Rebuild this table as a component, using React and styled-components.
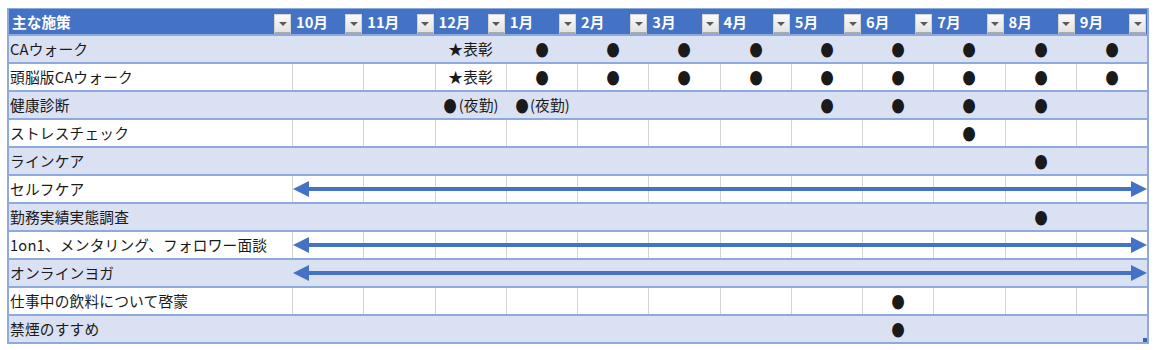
import React from "react";
import styled, { createGlobalStyle } from "styled-components";

const GlobalStyle = createGlobalStyle`
  body {
    margin: 0;
    background: #fff;
    font-family: "Noto Sans CJK JP", "Noto Sans", sans-serif;
  }
`;

const months = ["10月", "11月", "12月", "1月", "2月", "3月", "4月", "5月", "6月", "7月", "8月", "9月"];

const at = (idx, mark = "●") => {
  const list = Array(12).fill("");
  [].concat(idx).forEach((i) => (list[i] = mark));
  return list;
};

const caMarks = ["", "", "★表彰", "●", "●", "●", "●", "●", "●", "●", "●", "●"];

const rows = [
  { name: "CAウォーク", marks: caMarks },
  { name: "頭脳版CAウォーク", marks: caMarks },
  { name: "健康診断", marks: ["", "", "●(夜勤)", "●(夜勤)", "", "", "", "●", "●", "●", "●", ""] },
  { name: "ストレスチェック", marks: at(9) },
  { name: "ラインケア", marks: at(10) },
  { name: "セルフケア", marks: at([]), arrow: true },
  { name: "勤務実績実態調査", marks: at(10) },
  { name: "1on1、メンタリング、フォロワー面談", marks: at([]), arrow: true },
  { name: "オンラインヨガ", marks: at([]), arrow: true },
  { name: "仕事中の飲料について啓蒙", marks: at(8) },
  { name: "禁煙のすすめ", marks: at(8) },
];

const Page = styled.div`
  padding: 8px 0 0 7px;
`;

const Table = styled.div`
  position: relative;
  width: 1142px;
  border-left: 2px solid #8ea9db;
  border-right: 2px solid #8ea9db;
  box-sizing: border-box;
`;

const Grid = styled.div`
  display: grid;
  grid-template-columns: 283px repeat(12, 1fr);
`;

const HeaderRow = styled(Grid)`
  height: 26px;
  background: #4472c4;
  border-top: 1px solid #8ea9db;
  box-sizing: border-box;
`;

const HeadCell = styled.div`
  display: flex;
  align-items: center;
  justify-content: space-between;
  padding-left: ${(p) => (p.$first ? "3px" : "4px")};
  color: #fff;
  font-weight: 700;
  font-size: 14.7px;
  white-space: nowrap;
`;

const FilterButton = styled.span`
  display: flex;
  align-items: center;
  justify-content: center;
  align-self: flex-end;
  width: 17px;
  height: 20px;
  margin-right: 1px;
  box-sizing: border-box;
  background: linear-gradient(#fbfbfb, #e2e2e2);
  border: 1px solid #d4d4d4;
  border-bottom: 2px solid #a9a9a9;

  &::after {
    content: "";
    border-left: 4px solid transparent;
    border-right: 4px solid transparent;
    border-top: 4px solid #5a5a5a;
  }
`;

const Row = styled(Grid)`
  position: relative;
  height: 28px;
  box-sizing: border-box;
  border-top: 2px solid #8ea9db;
  background: ${(p) => (p.$shaded ? "#d9e1f2" : "#fff")};
  color: #1a1a1a;
  font-size: 14.7px;
  letter-spacing: 0.2px;
`;

const NameCell = styled.div`
  display: flex;
  align-items: center;
  padding: 0 0 1px 1px;
  white-space: nowrap;
  overflow: hidden;
`;

const Cell = styled.div`
  display: flex;
  align-items: center;
  justify-content: center;
  padding-bottom: 1px;
  white-space: nowrap;
  border-left: 1px solid ${(p) => (p.$shaded ? "transparent" : "#d4d4d4")};
`;

const Dot = styled.span`
  display: inline-block;
  transform: scaleX(0.82);
  font-size: 16px;
  line-height: 1;
`;

const ArrowLayer = styled.div`
  position: absolute;
  left: 284px;
  right: 0;
  top: 0;
  bottom: 0;
  display: flex;
  align-items: center;
`;

const Shaft = styled.div`
  flex: 1;
  height: 3.5px;
  background: #4472c4;
`;

const Head = ({ dir }) => (
  <svg width="16" height="16" viewBox="0 0 16 16" style={{ flex: "none" }}>
    {dir === "left" ? (
      <polygon points="0,8 16,0 16,16" fill="#4472c4" />
    ) : (
      <polygon points="16,8 0,0 0,16" fill="#4472c4" />
    )}
  </svg>
);

const BottomBorder = styled.div`
  height: 2px;
  background: #8ea9db;
`;

const ResizeHandle = styled.div`
  position: absolute;
  right: 0;
  bottom: 2px;
  width: 4px;
  height: 4px;
  background: #3f5fb0;
`;

const renderMark = (mark) => {
  if (!mark) return null;
  if (mark.startsWith("●")) {
    return (
      <>
        <Dot>●</Dot>
        {mark.slice(1)}
      </>
    );
  }
  return mark;
};

export default function App() {
  return (
    <>
      <GlobalStyle />
      <Page>
        <Table>
          <HeaderRow>
            <HeadCell $first>
              主な施策
              <FilterButton />
            </HeadCell>
            {months.map((m) => (
              <HeadCell key={m}>
                {m}
                <FilterButton />
              </HeadCell>
            ))}
          </HeaderRow>
          {rows.map((row, i) => {
            const shaded = i % 2 === 0;
            return (
              <Row key={row.name} $shaded={shaded}>
                <NameCell>{row.name}</NameCell>
                {row.marks.map((mark, j) => (
                  <Cell key={j} $shaded={shaded}>
                    {renderMark(mark)}
                  </Cell>
                ))}
                {row.arrow && (
                  <ArrowLayer>
                    <Head dir="left" />
                    <Shaft />
                    <Head dir="right" />
                  </ArrowLayer>
                )}
              </Row>
            );
          })}
          <BottomBorder />
          <ResizeHandle />
        </Table>
      </Page>
    </>
  );
}
